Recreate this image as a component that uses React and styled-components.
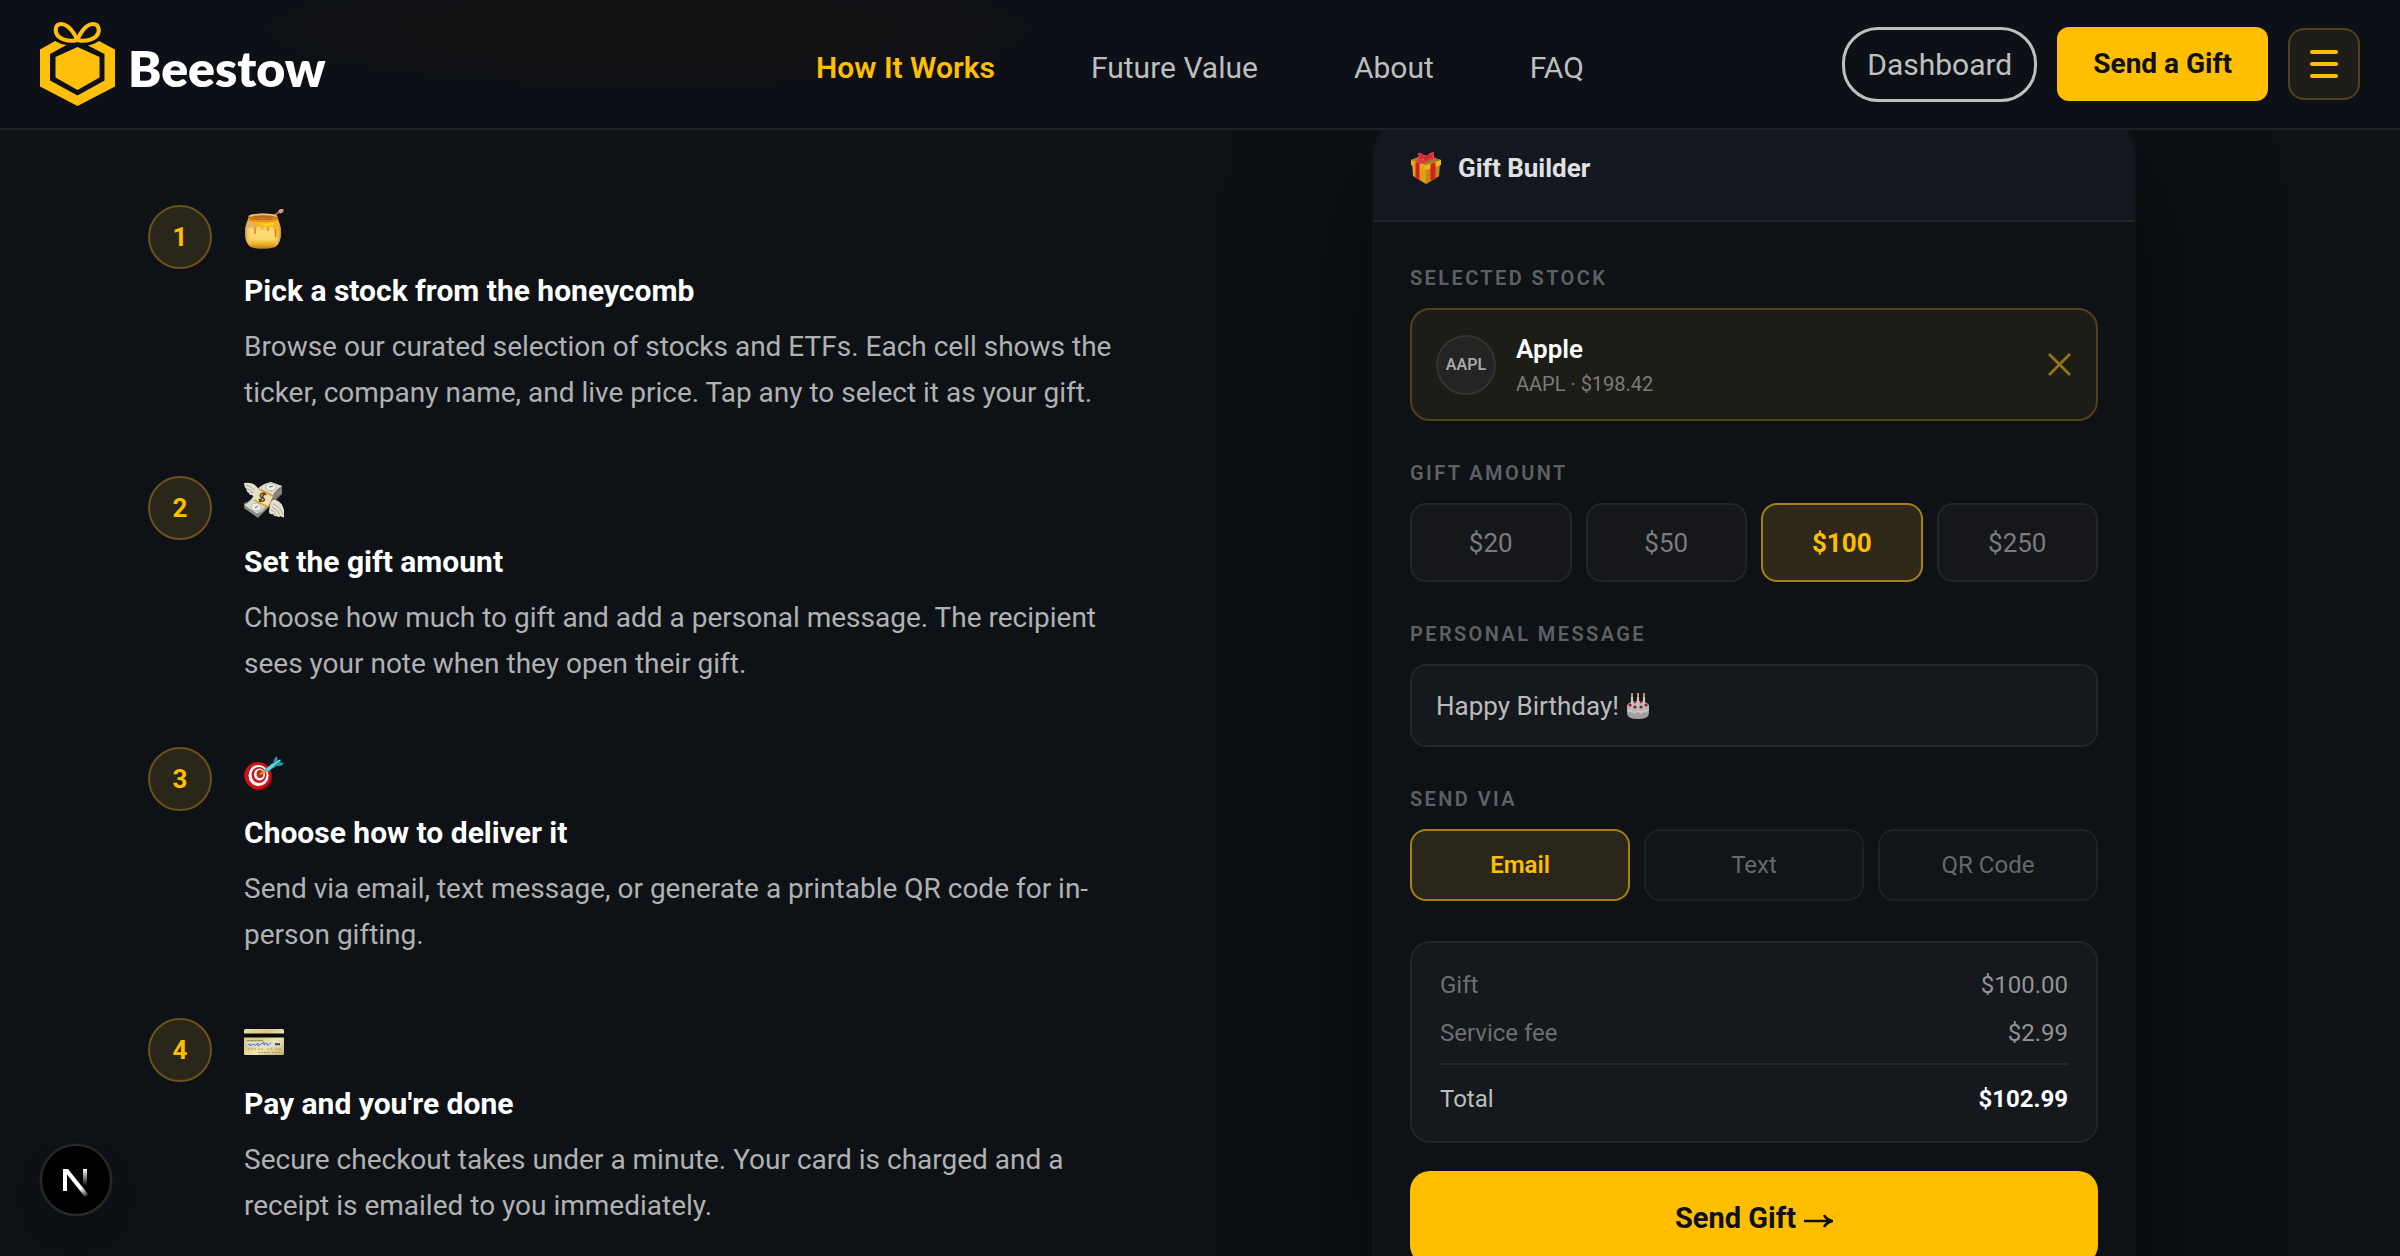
import { useState } from "react";
import styled, { createGlobalStyle, css } from "styled-components";

const GlobalStyle = createGlobalStyle`
  *,
  *::before,
  *::after {
    box-sizing: border-box;
  }
  body {
    margin: 0;
    background: #0e1116;
    color: #fff;
    font-family: Roboto, "Liberation Sans", sans-serif;
  }
  h2,
  h3,
  p,
  ol,
  dl,
  dd {
    margin: 0;
    padding: 0;
  }
  button,
  input {
    font-family: inherit;
  }
`;

const Page = styled.div`
  height: 100vh;
  overflow: hidden;
`;

const Header = styled.header`
  position: sticky;
  top: 0;
  z-index: 2;
  display: grid;
  grid-template-columns: 1fr auto 1fr;
  align-items: center;
  height: 130px;
  padding: 0 40px;
  border-bottom: 2px solid #1e2125;
  background: radial-gradient(
      ellipse 420px 64px at 27% 30px,
      #111214 60%,
      transparent 100%
    )
    #0d1017;
`;

const LogoLink = styled.a`
  display: flex;
  align-items: center;
  gap: 12px;
  color: #fff;
  text-decoration: none;
`;

const LogoMark = styled.svg`
  width: 76px;
  height: 84px;
`;

const LogoText = styled.span`
  font-family: Lato, "Noto Sans", sans-serif;
  font-size: 50px;
  font-weight: 800;
  line-height: 60px;
  padding-top: 7px;
`;

const Nav = styled.nav`
  display: flex;
  gap: 96px;
  padding-top: 8px;
`;

const NavLink = styled.a`
  font-size: 30px;
  line-height: 36px;
  text-decoration: none;
  white-space: nowrap;
  color: ${({ $active }) => ($active ? "#ffbf00" : "#bebebe")};
  font-weight: ${({ $active }) => ($active ? 600 : 400)};
`;

const Actions = styled.div`
  display: flex;
  align-items: center;
  justify-content: flex-end;
  gap: 20px;
`;

const DashboardLink = styled.a`
  height: 75px;
  padding: 0 22px;
  border: 3px solid #c0c0c0;
  border-radius: 36px;
  color: #c0c0c0;
  font-size: 30px;
  line-height: 69px;
  text-decoration: none;
`;

const SendLink = styled.a`
  height: 74px;
  padding: 0 36px;
  border-radius: 12px;
  background: #ffbf00;
  color: #0d1116;
  font-size: 28px;
  font-weight: 700;
  line-height: 74px;
  text-decoration: none;
  white-space: nowrap;
`;

const MenuButton = styled.button`
  display: flex;
  flex-direction: column;
  align-items: center;
  justify-content: center;
  gap: 8px;
  width: 72px;
  height: 72px;
  padding: 0;
  border: 2px solid #51401a;
  border-radius: 16px;
  background: #1f1d19;
`;

const MenuBar = styled.span`
  width: 28px;
  height: 4px;
  border-radius: 2px;
  background: #ffbf00;
`;

const Main = styled.main`
  display: grid;
  grid-template-columns: minmax(0, 1fr) minmax(0, 1fr);
  gap: 112px;
  max-width: 2200px;
  margin: -16px auto 0;
  padding: 0 48px 96px;
`;

const Steps = styled.ol`
  display: flex;
  flex-direction: column;
  gap: 60px;
  padding-top: 91px;
  list-style: none;
`;

const Step = styled.li`
  display: flex;
  align-items: flex-start;
  gap: 32px;
`;

const StepNumber = styled.span`
  flex: none;
  width: 64px;
  height: 64px;
  border: 2px solid #6b521b;
  border-radius: 50%;
  background: #2a2619;
  color: #ffbf00;
  font-size: 26px;
  font-weight: 700;
  line-height: 60px;
  text-align: center;
`;

const StepBody = styled.div`
  padding-top: 4px;

  svg {
    display: block;
    width: 40px;
    height: 40px;
  }
`;

const StepTitle = styled.h3`
  margin-top: 24px;
  font-size: 30px;
  font-weight: 700;
  line-height: 36px;
`;

const StepText = styled.p`
  margin-top: 15px;
  color: #b0b1b2;
  font-size: 28px;
  line-height: 46px;
`;

const Card = styled.section`
  justify-self: center;
  align-self: start;
  width: 100%;
  max-width: 764px;
  overflow: hidden;
  border: 2px solid #111417;
  border-radius: 40px;
  background: #0e1116;
  box-shadow: 0 48px 128px rgba(0, 0, 0, 0.6);
`;

const CardHeader = styled.div`
  display: flex;
  align-items: center;
  gap: 16px;
  padding: 36px;
  border-bottom: 2px solid #1f242b;
  background: #131820;

  svg {
    width: 32px;
    height: 32px;
  }
`;

const CardTitle = styled.h2`
  color: #e0e1e2;
  font-size: 26px;
  font-weight: 700;
  line-height: 32px;
`;

const CardBody = styled.form`
  display: flex;
  flex-direction: column;
  gap: 40px;
  padding: 44px 36px 36px;
`;

const Group = styled.div`
  display: flex;
  flex-direction: column;
  gap: 18px;
`;

const labelStyle = css`
  color: #5e6164;
  font-size: 20px;
  font-weight: 600;
  letter-spacing: 0.12em;
  line-height: 24px;
  text-transform: uppercase;
`;

const Label = styled.span`
  ${labelStyle}
`;

const FieldLabel = styled.label`
  ${labelStyle}
`;

const StockBox = styled.div`
  display: flex;
  align-items: center;
  gap: 20px;
  padding: 24px;
  border: 2px solid #53411a;
  border-radius: 20px;
  background: #1d1d18;
`;

const Ticker = styled.span`
  flex: none;
  width: 60px;
  height: 60px;
  border: 2px solid #343434;
  border-radius: 50%;
  background: #242424;
  color: #a8a8a8;
  font-size: 16px;
  font-weight: 600;
  line-height: 56px;
  text-align: center;
`;

const StockInfo = styled.div`
  flex: 1;
  display: flex;
  flex-direction: column;
  gap: 8px;
`;

const StockName = styled.strong`
  font-size: 26px;
  font-weight: 600;
  line-height: 31px;
`;

const StockPrice = styled.span`
  color: #7c7b79;
  font-size: 20px;
  line-height: 22px;
`;

const RemoveButton = styled.button`
  display: flex;
  padding: 0;
  border: 0;
  background: none;
  color: #9b741a;
`;

const OptionRow = styled.div`
  display: flex;
  gap: 14px;
`;

const Option = styled.button`
  flex: 1;
  height: 79px;
  padding: 0;
  border: 2px solid #22252a;
  border-radius: 16px;
  background: #15171b;
  color: #7b7c7e;
  font-size: 26px;

  ${({ $small }) =>
    $small &&
    css`
      height: 72px;
      border-color: #1d2024;
      background: #111418;
      color: #66686b;
      font-size: 24px;
    `}

  ${({ $selected, $small }) =>
    $selected &&
    css`
      border-color: #a87f14;
      background: ${$small ? "#2a2619" : "#302919"};
      color: #ffbf00;
      font-weight: ${$small ? 600 : 700};
    `}
`;

const MessageField = styled.div`
  display: flex;
  align-items: center;
  gap: 7px;
  height: 83px;
  padding: 0 24px;
  border: 2px solid #22252a;
  border-radius: 16px;
  background: #15181c;

  svg {
    flex: none;
    width: 24px;
    height: 26px;
  }
`;

const MessageInput = styled.input`
  field-sizing: content;
  padding: 0;
  border: 0;
  outline: none;
  background: none;
  color: #babbbc;
  font-size: 26px;
  line-height: 36px;
`;

const Summary = styled.dl`
  display: flex;
  flex-direction: column;
  gap: 12px;
  padding: 24px 28px;
  border: 2px solid #212429;
  border-radius: 20px;
  background: #15181c;
  font-size: 24px;
  line-height: 36px;
`;

const SummaryRow = styled.div`
  display: flex;
  justify-content: space-between;
  color: #6d6f72;

  dd {
    color: #929395;
  }

  ${({ $total }) =>
    $total &&
    css`
      padding-top: 16px;
      border-top: 2px solid #25282c;
      color: #bcbdbe;

      dd {
        color: #fff;
        font-weight: 700;
      }
    `}
`;

const SubmitButton = styled.button`
  display: flex;
  align-items: center;
  justify-content: center;
  gap: 8px;
  height: 94px;
  margin-top: -12px;
  border: 0;
  border-radius: 20px;
  background: #ffbf00;
  color: #0d1116;
  font-size: 29px;
  font-weight: 700;
`;

const DevBadge = styled.button`
  position: fixed;
  left: 40px;
  bottom: 40px;
  width: 72px;
  height: 72px;
  padding: 0;
  border: 2px solid #2b2b2b;
  border-radius: 50%;
  background: #000;
  box-shadow: 0 0 0 1px #171717, 0 16px 32px -8px rgba(0, 0, 0, 0.24);

  svg {
    display: block;
    width: 68px;
    height: 68px;
  }
`;

const Logo = () => (
  <LogoLink href="#" aria-label="Beestow">
    <LogoMark viewBox="40 22 76 84" fill="#ffbf0a">
      <path d="M55 41 40 49.500V86.500L77.500 106 115 86.500V49.500L99 41Q94 44.500 88 45.500L104.500 54V80.500L77.500 95.500 50 80.500V54L66.500 45Q60 44 55 41Z" />
      <path d="M77.500 47 99.500 57V77.500L77.500 90 55.500 77.500V57Z" />
      <path
        d="M77.300 42C76 34 68 24 61 24C55 24 54 32 58.500 36.500C63 40.500 70 41 75.500 40.500M77.300 42C78.600 34 86 24 93 24C99.500 24 100.500 32 96 36.500C91.500 40.500 84.500 41 79 40.500"
        fill="none"
        stroke="#ffbf0a"
        strokeWidth="4"
      />
    </LogoMark>
    <LogoText>Beestow</LogoText>
  </LogoLink>
);

const HoneyIcon = () => (
  <svg viewBox="0 0 40 40" aria-hidden="true">
    <defs>
      <linearGradient id="jar" x1="0" y1="0" x2="0" y2="1">
        <stop offset="0" stopColor="#eda83a" />
        <stop offset="0.45" stopColor="#fbdc80" />
        <stop offset="0.7" stopColor="#fbd766" />
        <stop offset="0.88" stopColor="#e8a61e" />
        <stop offset="1" stopColor="#b5761a" />
      </linearGradient>
      <linearGradient id="jarSide" x1="0" x2="1">
        <stop offset="0" stopColor="#c97f12" stopOpacity="0.8" />
        <stop offset="0.18" stopColor="#ffe58a" stopOpacity="0" />
        <stop offset="0.8" stopColor="#ffe58a" stopOpacity="0" />
        <stop offset="1" stopColor="#c97f12" stopOpacity="0.9" />
      </linearGradient>
    </defs>
    <path d="M29 8 36 2" stroke="#a9653f" strokeWidth="2" />
    <ellipse cx="37" cy="2" rx="2.800" ry="2" fill="#d69a77" transform="rotate(-35 37 2)" />
    <path
      d="M5 8C3 13 1 17 1 23C1 32 4 37 8 38.500Q19 41 30 38.500C34 37 37 32 37 23C37 17 35 13 33 8Z"
      fill="url(#jar)"
    />
    <path
      d="M5 8C3 13 1 17 1 23C1 32 4 37 8 38.500Q19 41 30 38.500C34 37 37 32 37 23C37 17 35 13 33 8Z"
      fill="url(#jarSide)"
    />
    <path d="M5 12 3 18 9 19 11 12Z" fill="#dca985" opacity="0.8" />
    <path
      d="M10 12H33L34 17 33 27Q31.500 31 30.500 27Q30.500 19 27.500 17.500Q25 17 24.500 21Q23 23 22 17.500Q20 16 19 21Q17.500 23 16.500 17.500Q14 16 12.500 19L11.500 25 10.500 25Q10.500 17 8 15Z"
      fill="#f5b526"
    />
    <path d="M15 13Q23 16 30 13L29 16 25 16 22 17 19 16Z" fill="#ffdb22" />
    <path d="M24 19V22M11 18V25M31.500 20V28" stroke="#cc7d10" strokeWidth="1" />
    <ellipse cx="19" cy="8" rx="15" ry="3.500" fill="#b96818" />
    <ellipse cx="19" cy="7" rx="14" ry="2.400" fill="#f1bd68" />
    <ellipse cx="19" cy="7.800" rx="12" ry="1.500" fill="#aa711c" />
    <path d="M4 9Q4 12 7 12.500Q19 14 31 12.500Q34 12 34 9Q19 14 4 9Z" fill="#eb9011" />
  </svg>
);

const MoneyIcon = () => (
  <svg viewBox="0 0 40 40" aria-hidden="true">
    <path d="M12 11Q17 4 27 2L38 6V14L14 38 0 28V23Q8 21 12 11Z" fill="#73746d" />
    <path d="M12 11Q17 4 27 2L38 6Q30 11 27 19 22 31 13 34L0 25Q8 22 12 11Z" fill="#d9dbd0" />
    <path d="M1 28 13 36 24 27M1 26 13 34 26 23M28 16 37 10M27 19 38 12" fill="none" stroke="#a0a297" />
    <ellipse cx="27" cy="7" rx="5" ry="3.800" fill="#f0f1e8" stroke="#a9b1a2" strokeWidth="0.800" />
    <ellipse cx="12" cy="27" rx="5" ry="3.800" fill="#f0f1e8" stroke="#a9b1a2" strokeWidth="0.800" />
    <path d="M25 7 29 6M11 28 14 26" stroke="#719174" strokeWidth="1.500" />
    <path d="M15 9 29 16 24 27 10 20Z" fill="#efdfb0" />
    <path d="M15 9 29 16M10 20 24 27" stroke="#e4a018" strokeWidth="1.500" />
    <path
      d="M22 15Q20 12 17 14Q15 17 19 18Q22 20 19 21Q16 22 15 19M21 12.500 15.500 22"
      fill="none"
      stroke="#5c4928"
      strokeWidth="1.600"
    />
    <path
      d="M0 3Q8 2 12 6Q16 9 14 14L12 17Q9 17 8 15Q5 15 5 13Q2 12 2.500 9Q0 7 0 3Z"
      fill="#e4dfd1"
    />
    <path d="M2 5Q7 6 10 10M3 9Q7 9 9 13M6 13 9 12" fill="none" stroke="#aaa496" strokeWidth="0.900" />
    <path
      d="M26 25Q27 19 32 20Q38 22 40 30V37Q38 38 37 36Q34 38 33 36Q30 37 29 34Q25 35 25 31Z"
      fill="#e4dfd1"
    />
    <path d="M29 24Q37 27 39 35M28 27Q34 29 36 35M27 30Q31 31 32 35" fill="none" stroke="#aaa496" strokeWidth="0.900" />
  </svg>
);

const TargetIcon = () => (
  <svg viewBox="0 0 40 40" aria-hidden="true">
    <ellipse cx="15" cy="26" rx="13" ry="13.500" fill="#85080d" />
    <ellipse cx="13.800" cy="24.500" rx="13.500" ry="13.500" fill="#cf1219" />
    <ellipse cx="14.500" cy="24.500" rx="10" ry="10.500" fill="#fff" />
    <ellipse cx="15" cy="24" rx="7.500" ry="8" fill="#c51820" />
    <ellipse cx="15.500" cy="23.500" rx="5.500" ry="6" fill="#fff" />
    <ellipse cx="16" cy="23" rx="3.500" ry="4" fill="#b92a1c" />
    <path d="M15 23 22 18 23 21 16 24Z" fill="#e59b22" />
    <path d="M21 18 30 11 32 15 23 21.500Z" fill="#38bdd0" />
    <path d="M29 13 30 8 33 5 34 10 38 8 36 11 40 12 37 15 31 15Z" fill="#2c91a6" />
    <path d="M23 19 32 12 36 9" fill="none" stroke="#7be9f0" strokeWidth="1.300" />
  </svg>
);

const CardIcon = () => (
  <svg viewBox="0 0 40 40" aria-hidden="true">
    <defs>
      <linearGradient id="plastic" x1="0" y1="0" x2="1" y2="1">
        <stop offset="0" stopColor="#ece1a0" />
        <stop offset="0.35" stopColor="#d9ca83" />
        <stop offset="0.6" stopColor="#efe6b3" />
        <stop offset="1" stopColor="#c2b069" />
      </linearGradient>
    </defs>
    <rect y="7" width="40" height="26" rx="1.500" fill="url(#plastic)" />
    <rect y="11.500" width="40" height="4" fill="#080806" />
    <path d="M3 18.500H19" stroke="#8c814f" strokeDasharray="3 0.500" strokeWidth="0.900" />
    <rect x="3" y="20" width="34" height="4.500" fill="#dcdfe0" />
    <path
      d="M4 23Q7 20 6 24L9 22 11 23.500 14 21V24L17 22 20 20 20 23 23 21 24 23.500 27 20.500"
      fill="none"
      stroke="#4c74bb"
      strokeWidth="1"
    />
    <path d="M31 22.200H36" stroke="#3b3d40" strokeWidth="2" />
    <path d="M4 27H12M14 27H20M23 27H29M32 27H37M14 30.500H26M28 30.500H37" stroke="#aaa06b" strokeDasharray="2 1" />
  </svg>
);

const GiftIcon = () => (
  <svg viewBox="0 0 32 32" aria-hidden="true">
    <path d="M2 9 16 14 30 9 29 24 16 32 3 24Z" fill="#dca014" />
    <path d="M16 15 29 10V24L16 32Z" fill="#c5870f" />
    <path d="M1 8 14 3 31 8V13L16 18 1 13Z" fill="#f2b61e" />
    <path d="M1 8 16 13V18L1 13Z" fill="#eba817" />
    <path d="M1 8 14 3 31 8 16 13Z" fill="#a87922" />
    <path d="M5.500 10 9.500 11.500V28.500L5.500 26ZM20.500 12 25.500 10V26L20.500 29Z" fill="#cf2029" />
    <path d="M6 9.500 22 4 26 6 10 12Z" fill="#e23540" />
    <path d="M16 6Q12 0 8 1L9 8Q13 9 16 6 21 9 24 7L24 0Q19 0 16 6Z" fill="#f0414b" />
    <path d="M9 2 13 5 9 7M23 2 19 5 23 6" fill="none" stroke="#b71f2d" strokeWidth="1.200" />
    <rect x="14" y="3.500" width="4.500" height="4.500" rx="1.500" fill="#d52532" />
  </svg>
);

const CakeIcon = () => (
  <svg viewBox="0 0 24 26" aria-hidden="true">
    <path d="M1 12V20Q1 26 12 26Q23 26 23 20V12Z" fill="#a29f9e" />
    <ellipse cx="12" cy="13" rx="11" ry="5" fill="#bcb9b7" />
    <path d="M1 15Q3 18 5 16 8 20 12 17 16 20 19 16 22 18 23 14V17Q20 20 18 19 14 22 12 19 8 22 6 19 2 20 1 17Z" fill="#c8c5c3" />
    <path d="M6 4V12M12 4V14M18 4V12" stroke="#cbc3bc" strokeWidth="2.200" />
    <path d="M6 0V4M12 0V4M18 0V4" stroke="#b09b49" strokeWidth="2" />
    <g fill="#8f1832">
      <circle cx="4" cy="12" r="1.600" />
      <circle cx="9" cy="14" r="1.600" />
      <circle cx="15" cy="14" r="1.600" />
      <circle cx="20" cy="12" r="1.600" />
      <circle cx="9" cy="9" r="1.200" />
      <circle cx="15" cy="9" r="1.200" />
    </g>
  </svg>
);

const steps = [
  {
    Icon: HoneyIcon,
    title: "Pick a stock from the honeycomb",
    text: "Browse our curated selection of stocks and ETFs. Each cell shows the ticker, company name, and live price. Tap any to select it as your gift.",
  },
  {
    Icon: MoneyIcon,
    title: "Set the gift amount",
    text: "Choose how much to gift and add a personal message. The recipient sees your note when they open their gift.",
  },
  {
    Icon: TargetIcon,
    title: "Choose how to deliver it",
    text: "Send via email, text message, or generate a printable QR code for in-person gifting.",
  },
  {
    Icon: CardIcon,
    title: "Pay and you're done",
    text: "Secure checkout takes under a minute. Your card is charged and a receipt is emailed to you immediately.",
  },
];

const links = ["How It Works", "Future Value", "About", "FAQ"];
const amounts = [20, 50, 100, 250];
const channels = ["Email", "Text", "QR Code"];
const FEE = 2.99;

const GiftBuilder = () => {
  const [amount, setAmount] = useState(100);
  const [channel, setChannel] = useState("Email");
  const [message, setMessage] = useState("Happy Birthday!");

  return (
    <Card>
      <CardHeader>
        <GiftIcon />
        <CardTitle>Gift Builder</CardTitle>
      </CardHeader>
      <CardBody onSubmit={(e) => e.preventDefault()}>
        <Group>
          <Label>Selected stock</Label>
          <StockBox>
            <Ticker>AAPL</Ticker>
            <StockInfo>
              <StockName>Apple</StockName>
              <StockPrice>AAPL · $198.42</StockPrice>
            </StockInfo>
            <RemoveButton type="button" aria-label="Remove Apple">
              <svg width="24" height="24" viewBox="0 0 24 24">
                <path d="M1 1 22 22M22 1 1 22" stroke="currentColor" strokeWidth="2.600" />
              </svg>
            </RemoveButton>
          </StockBox>
        </Group>
        <Group role="group" aria-labelledby="amount-label">
          <Label id="amount-label">Gift amount</Label>
          <OptionRow>
            {amounts.map((value) => (
              <Option
                key={value}
                type="button"
                aria-pressed={value === amount}
                $selected={value === amount}
                onClick={() => setAmount(value)}
              >
                ${value}
              </Option>
            ))}
          </OptionRow>
        </Group>
        <Group>
          <FieldLabel htmlFor="message">Personal message</FieldLabel>
          <MessageField>
            <MessageInput
              id="message"
              value={message}
              onChange={(e) => setMessage(e.target.value)}
            />
            <CakeIcon />
          </MessageField>
        </Group>
        <Group role="group" aria-labelledby="channel-label">
          <Label id="channel-label">Send via</Label>
          <OptionRow>
            {channels.map((name) => (
              <Option
                key={name}
                type="button"
                $small
                aria-pressed={name === channel}
                $selected={name === channel}
                onClick={() => setChannel(name)}
              >
                {name}
              </Option>
            ))}
          </OptionRow>
        </Group>
        <Summary>
          <SummaryRow>
            <dt>Gift</dt>
            <dd>${amount.toFixed(2)}</dd>
          </SummaryRow>
          <SummaryRow>
            <dt>Service fee</dt>
            <dd>${FEE.toFixed(2)}</dd>
          </SummaryRow>
          <SummaryRow $total>
            <dt>Total</dt>
            <dd>${(amount + FEE).toFixed(2)}</dd>
          </SummaryRow>
        </Summary>
        <SubmitButton type="submit">
          Send Gift
          <svg width="29" height="20" viewBox="0 0 29 20" aria-hidden="true">
            <path
              d="M0 13H27M20 7Q22 11 28 13Q22 15 20 19"
              fill="none"
              stroke="currentColor"
              strokeWidth="2.600"
            />
          </svg>
        </SubmitButton>
      </CardBody>
    </Card>
  );
};

export default function App() {
  return (
    <Page>
      <GlobalStyle />
      <Header>
        <Logo />
        <Nav>
          {links.map((link, i) => (
            <NavLink key={link} href="#" $active={i === 0}>
              {link}
            </NavLink>
          ))}
        </Nav>
        <Actions>
          <DashboardLink href="#">Dashboard</DashboardLink>
          <SendLink href="#">Send a Gift</SendLink>
          <MenuButton aria-label="Open menu">
            <MenuBar />
            <MenuBar />
            <MenuBar />
          </MenuButton>
        </Actions>
      </Header>
      <Main>
        <Steps>
          {steps.map(({ Icon, title, text }, i) => (
            <Step key={title}>
              <StepNumber>{i + 1}</StepNumber>
              <StepBody>
                <Icon />
                <StepTitle>{title}</StepTitle>
                <StepText>{text}</StepText>
              </StepBody>
            </Step>
          ))}
        </Steps>
        <GiftBuilder />
      </Main>
      <DevBadge aria-label="Open Next.js Dev Tools">
        <svg viewBox="0 0 68 68">
          <defs>
            <linearGradient id="diag" x1="34" y1="36" x2="47" y2="51" gradientUnits="userSpaceOnUse">
              <stop offset="0.400" stopColor="#fff" />
              <stop offset="1" stopColor="#fff" stopOpacity="0" />
            </linearGradient>
            <linearGradient id="stem" x1="0" y1="23" x2="0" y2="40" gradientUnits="userSpaceOnUse">
              <stop offset="0" stopColor="#fff" />
              <stop offset="1" stopColor="#fff" stopOpacity="0" />
            </linearGradient>
          </defs>
          <path d="M21 23H26L46 48 43 51 25 28.500V45H21Z" fill="url(#diag)" />
          <path d="M41 23H45V40H41Z" fill="url(#stem)" />
        </svg>
      </DevBadge>
    </Page>
  );
}
